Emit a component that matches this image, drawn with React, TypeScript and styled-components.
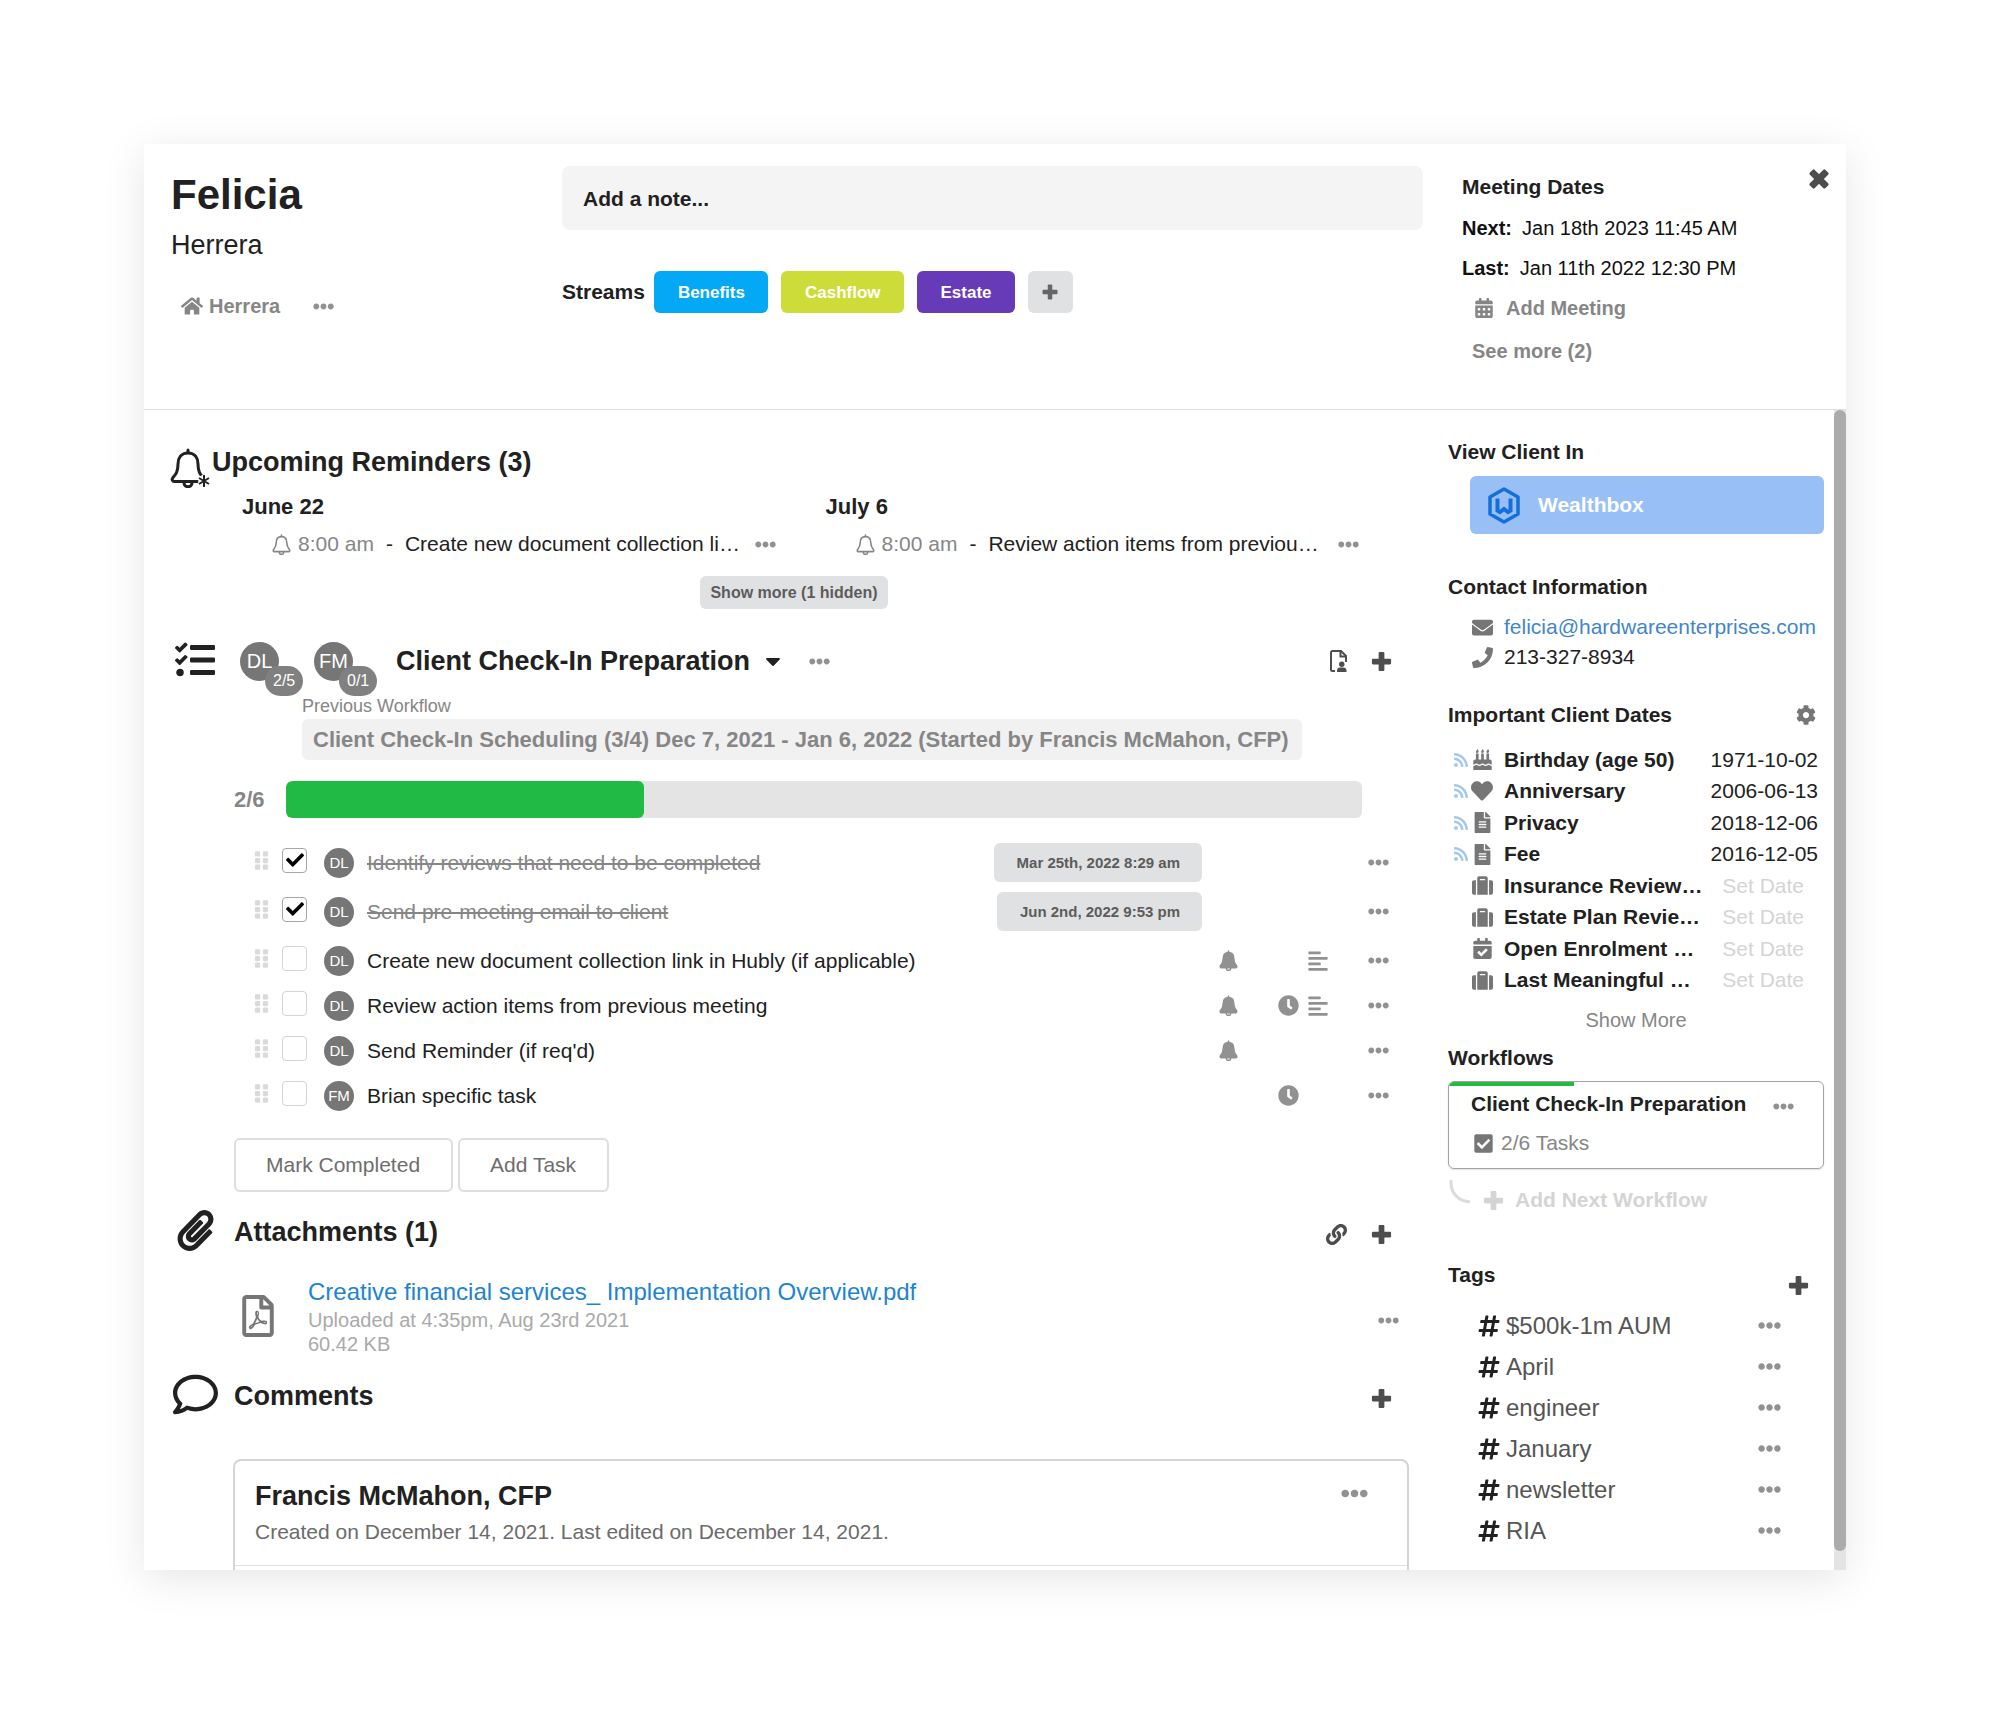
import React, { useState } from 'react';
import styled, { createGlobalStyle, css } from 'styled-components';
import {
  FaAlignLeft,
  FaBirthdayCake,
  FaCalendarAlt,
  FaCalendarCheck,
  FaCaretDown,
  FaCheck,
  FaCheckSquare,
  FaClock,
  FaCog,
  FaEllipsisH,
  FaEnvelope,
  FaFileAlt,
  FaGripVertical,
  FaHashtag,
  FaHeart,
  FaHome,
  FaLink,
  FaPaperclip,
  FaPhone,
  FaRegComment,
  FaRegFilePdf,
  FaRss,
  FaSuitcase,
  FaTasks,
} from 'react-icons/fa';

const color = {
  ink: '#212121',
  dark: '#4d4d4d',
  icon: '#767676',
  muted: '#868686',
  dots: '#919191',
  soft: '#aaaaaa',
  faint: '#d4d4d4',
  line: '#dddddd',
  chip: '#e0e1e2',
  chipText: '#5c5c5c',
  green: '#21ba45',
  link: '#1e84d0',
};

const GlobalStyle = createGlobalStyle`
  *, *::before, *::after { box-sizing: border-box; }
  body {
    margin: 0;
    background: #fff;
    color: ${color.ink};
    font-family: "Helvetica Neue", "Liberation Sans", Arial, sans-serif;
    font-size: 21px;
    line-height: 26px;
  }
  h1, h2, h3, h4, p, ul { margin: 0; padding: 0; }
  ul { list-style: none; }
  svg { display: block; flex: none; }
`;

const Page = styled.div`
  height: 100vh;
  padding: 144px;
`;

const Panel = styled.main`
  display: flex;
  flex-direction: column;
  height: 100%;
  background: #fff;
  box-shadow: 0 8px 40px rgba(0, 0, 0, 0.1);
`;

const PlainButton = styled.button`
  display: flex;
  align-items: center;
  margin: 0;
  padding: 0;
  border: 0;
  background: none;
  color: ${color.dark};
  font: inherit;
  cursor: pointer;
`;

const DotsButton = styled(PlainButton)<{ $size?: number }>`
  color: ${color.dots};
  font-size: ${(p) => p.$size ?? 21}px;
  line-height: 1;
`;

function Dots({ label, size }: { label: string; size?: number }) {
  return (
    <DotsButton type="button" aria-label={label} $size={size}>
      <FaEllipsisH />
    </DotsButton>
  );
}

/* ---------- header ---------- */

const Header = styled.header`
  display: grid;
  grid-template-columns: 391px minmax(0, 1fr) 423px;
  flex: none;
  padding: 22px 0 38px 27px;
  border-bottom: 1px solid ${color.line};
`;

const Identity = styled.div`
  padding-top: 5px;
`;

const FirstName = styled.h1`
  font-size: 42px;
  line-height: 48px;
`;

const LastName = styled.p`
  margin-top: 10px;
  font-size: 27px;
  line-height: 32px;
`;

const Household = styled.div`
  display: flex;
  align-items: center;
  gap: 33px;
  margin-top: 33px;
  padding-left: 10px;
`;

const HouseholdButton = styled(PlainButton)`
  gap: 6px;
  color: ${color.muted};
  font-size: 20px;
  font-weight: 700;
  line-height: 24px;
`;

const NoteInput = styled.input`
  display: block;
  width: 100%;
  height: 64px;
  padding: 2px 21px 0;
  border: 0;
  border-radius: 8px;
  background: #f4f4f4;
  color: ${color.ink};
  font: inherit;
  font-weight: 700;
  &::placeholder {
    color: ${color.ink};
    opacity: 1;
  }
`;

const Streams = styled.div`
  display: flex;
  align-items: center;
  gap: 13px;
  margin-top: 41px;
`;

const StreamsLabel = styled.span`
  margin-right: -4px;
  font-weight: 700;
`;

const StreamButton = styled.button<{ $bg: string }>`
  height: 42px;
  padding: 1px 23px 0 24px;
  border: 0;
  border-radius: 6px;
  background: ${(p) => p.$bg};
  color: #fff;
  font: inherit;
  font-size: 17px;
  font-weight: 700;
`;

const AddStreamButton = styled(PlainButton)`
  justify-content: center;
  width: 45px;
  height: 42px;
  border-radius: 6px;
  background: ${color.chip};
  color: #666;
`;

const Meetings = styled.section`
  display: flex;
  align-items: flex-start;
  justify-content: space-between;
  padding: 0 13px 0 39px;
`;

const MeetingList = styled.div`
  padding-top: 8px;
  font-size: 20px;
  line-height: 40px;
`;

const SideTitle = styled.h2`
  font-size: 21px;
  line-height: 26px;
`;

const MeetingRows = styled.div`
  margin-top: 8px;
`;

const MeetingRow = styled.p`
  display: flex;
  gap: 10px;
  color: #111;
`;

const MeetingAction = styled(PlainButton)`
  gap: 12px;
  padding-left: 12px;
  color: ${color.muted};
  font-weight: 700;
  & + & {
    margin-top: 3px;
    padding-left: 10px;
  }
`;

const CloseButton = styled(PlainButton)`
  height: 26px;
`;

/* ---------- body ---------- */

const Body = styled.div`
  display: flex;
  flex: 1;
  min-height: 0;
`;

const Scroller = styled.div`
  display: flex;
  flex: 1;
  min-width: 0;
  overflow-y: auto;
  scrollbar-width: none;
`;

const ScrollTrack = styled.div`
  flex: none;
  width: 12px;
  padding-bottom: 19px;
  background: #e4e4e4;
`;

const ScrollThumb = styled.div`
  height: 100%;
  border-radius: 6px;
  background: #ababab;
`;

const Content = styled.div`
  flex: 1;
  min-width: 0;
  padding: 36px 39px 0 27px;
`;

const SectionTitle = styled.h2`
  font-size: 27px;
  line-height: 32px;
  white-space: nowrap;
`;

const ReminderHead = styled.div`
  display: flex;
  align-items: flex-start;
  gap: 7px;
  height: 42px;
`;

const BellMark = styled.span`
  position: relative;
  display: flex;
  justify-content: center;
  width: 34px;
  padding-top: 2px;
`;

const BellStar = styled.svg`
  position: absolute;
  right: -6px;
  bottom: 0;
`;

const ReminderGrid = styled.div`
  display: grid;
  grid-template-columns: repeat(2, minmax(0, 1fr));
  margin: 6px 0 0 71px;
`;

const ReminderDay = styled.h3`
  font-size: 22px;
  line-height: 26px;
`;

const ReminderRow = styled.div`
  display: flex;
  align-items: center;
  gap: 12px;
  margin-top: 8px;
  padding: 0 50px 0 29px;
  line-height: 32px;
`;

const ReminderTime = styled.span`
  display: flex;
  align-items: center;
  gap: 6px;
  color: ${color.muted};
  white-space: nowrap;
`;

const ReminderText = styled.span`
  flex: 1;
  min-width: 0;
  white-space: nowrap;
`;

const ShowHiddenRow = styled.div`
  display: flex;
  justify-content: center;
  margin: 16px 0 0 8px;
`;

const ShowHiddenButton = styled.button`
  height: 33px;
  padding: 0 10px;
  border: 0;
  border-radius: 6px;
  background: ${color.chip};
  color: ${color.chipText};
  font: inherit;
  font-size: 16px;
  font-weight: 700;
`;

const SectionHead = styled.div<{ $top: number }>`
  display: flex;
  align-items: center;
  height: 42px;
  margin-top: ${(p) => p.$top}px;
  padding-right: 16px;
`;

const IconSlot = styled.span`
  display: flex;
  justify-content: center;
  width: 48px;
  margin-right: 15px;
  padding-bottom: 3px;
`;

const HeadActions = styled.div<{ $drop?: boolean }>`
  display: flex;
  align-items: center;
  gap: 23px;
  margin-left: auto;
  padding-top: ${(p) => (p.$drop ? 4 : 0)}px;
`;

const People = styled.div`
  display: flex;
  gap: 35px;
  margin: 0 43px 0 6px;
`;

const Avatar = styled.span<{ $large?: boolean }>`
  position: relative;
  display: flex;
  flex: none;
  align-items: center;
  justify-content: center;
  width: ${(p) => (p.$large ? 39 : 30)}px;
  height: ${(p) => (p.$large ? 39 : 30)}px;
  border-radius: 50%;
  background: ${color.icon};
  color: #fff;
  font-size: ${(p) => (p.$large ? 20 : 15)}px;
`;

const AvatarCount = styled.span`
  position: absolute;
  top: 24px;
  left: 25px;
  height: 30px;
  padding: 0 8px;
  border-radius: 15px;
  background: #808080;
  font-size: 16px;
  line-height: 30px;
`;

const WorkflowPicker = styled(PlainButton)`
  gap: 11px;
  margin-right: 24px;
  color: ${color.ink};
  white-space: nowrap;
`;

const Previous = styled.div`
  margin: 13px 0 0 131px;
`;

const PreviousLabel = styled.p`
  color: ${color.muted};
  font-size: 18px;
  line-height: 22px;
`;

const PreviousButton = styled.button`
  height: 41px;
  margin-top: 2px;
  padding: 0 13px 0 11px;
  border: 0;
  border-radius: 6px;
  background: #f1f1f1;
  color: ${color.muted};
  font: inherit;
  font-size: 22px;
  font-weight: 700;
  white-space: nowrap;
`;

const ProgressRow = styled.div`
  display: flex;
  align-items: center;
  gap: 21px;
  margin-top: 21px;
  padding: 0 47px 0 63px;
`;

const ProgressLabel = styled.span`
  color: ${color.muted};
  font-size: 22px;
  font-weight: 700;
`;

const ProgressTrack = styled.div`
  flex: 1;
  height: 37px;
  overflow: hidden;
  border-radius: 6px;
  background: #e4e4e4;
`;

const ProgressFill = styled.div`
  height: 100%;
  border-radius: 6px;
  background: ${color.green};
`;

const TaskList = styled.ul`
  display: flex;
  flex-direction: column;
  margin-top: 20px;
`;

const TaskRow = styled.li<{ $done: boolean }>`
  display: flex;
  align-items: center;
  height: ${(p) => (p.$done ? 49 : 45)}px;
  padding: 0 16px 0 80px;
`;

const TaskGap = styled.li`
  height: 2px;
`;

const TaskControls = styled.span`
  display: flex;
  align-items: center;
  gap: 10px;
  margin-right: 17px;
  padding-bottom: 5px;
  color: #dadada;
`;

const CheckWrap = styled.span`
  position: relative;
  display: flex;
  align-items: center;
  justify-content: center;
  width: 25px;
  height: 25px;
`;

const CheckInput = styled.input`
  position: absolute;
  inset: 0;
  width: 100%;
  height: 100%;
  margin: 0;
  border: 1px solid #d4d4d5;
  border-radius: 4px;
  appearance: none;
  background: #fff;
  &:checked { border-color: #a6a6a6; }
`;

const CheckGlyph = styled(FaCheck)`
  position: relative;
  color: #000;
  font-size: 18px;
  pointer-events: none;
`;

const TaskLabel = styled.label<{ $done: boolean }>`
  flex: 1;
  margin-left: 13px;
  ${(p) =>
    p.$done &&
    css`
      color: ${color.muted};
    `}
`;

const Struck = styled.s`
  text-decoration-thickness: 2px;
`;

const DatePill = styled.button`
  height: 39px;
  margin-right: 11px;
  padding: 0 22px 0 23px;
  border: 0;
  border-radius: 6px;
  background: ${color.chip};
  color: ${color.chipText};
  font: inherit;
  font-size: 15px;
  font-weight: 700;
`;

const TaskIcons = styled.span`
  display: grid;
  grid-template-columns: repeat(6, 30px);
  align-items: center;
  justify-items: center;
  color: ${color.dots};
`;

const TaskButtons = styled.div`
  display: flex;
  gap: 5px;
  margin: 20px 0 0 63px;
`;

const OutlineButton = styled.button`
  height: 54px;
  padding: 0 31px 0 30px;
  border: 2px solid #dededf;
  border-radius: 6px;
  background: #fff;
  color: #6e6e6e;
  font: inherit;
`;

const FileRow = styled.div`
  display: flex;
  align-items: center;
  gap: 29px;
  margin-top: 23px;
  padding: 0 10px 0 66px;
  color: ${color.icon};
`;

const FileInfo = styled.div`
  flex: 1;
  color: ${color.soft};
  font-size: 20px;
  line-height: 24px;
`;

const FileLink = styled.a`
  display: block;
  color: ${color.link};
  font-size: 24px;
  line-height: 32px;
  text-decoration: none;
`;

const FileActions = styled.div`
  padding-top: 8px;
`;

const CommentCard = styled.article`
  margin: 42px 0 24px 62px;
  border: 2px solid #d4d4d5;
  border-radius: 8px;
`;

const CommentHead = styled.header`
  display: flex;
  align-items: flex-start;
  justify-content: space-between;
  padding: 19px 39px 20px 20px;
  border-bottom: 1px solid #e2e2e2;
`;

const CommentMeta = styled.p`
  margin-top: 7px;
  color: #6b6b6b;
`;

const CommentBody = styled.div`
  min-height: 60px;
`;

/* ---------- sidebar ---------- */

const Sidebar = styled.aside`
  flex: none;
  width: 386px;
  padding: 29px 10px 0 0;
`;

const CrmButton = styled.button`
  display: flex;
  align-items: center;
  gap: 18px;
  width: 354px;
  height: 58px;
  margin: 11px 0 0 22px;
  padding: 0 18px;
  border: 0;
  border-radius: 6px;
  background: #99bff7;
  color: #fff;
  font: inherit;
  font-weight: 700;
`;

const SideHead = styled.div<{ $top: number }>`
  display: flex;
  align-items: center;
  justify-content: space-between;
  height: 26px;
  margin-top: ${(p) => p.$top}px;
  padding-right: 8px;
`;

const ContactList = styled.ul`
  margin-top: 12px;
  padding-left: 22px;
`;

const ContactItem = styled.li`
  display: flex;
  align-items: center;
  gap: 10px;
  height: 30px;
  white-space: nowrap;
`;

const ContactIcon = styled.span`
  display: flex;
  justify-content: center;
  width: 24px;
  color: ${color.icon};
`;

const EmailLink = styled.a`
  color: #4285cc;
  text-decoration: none;
`;

const DatesTable = styled.table`
  width: 100%;
  height: 252px;
  margin-top: 16px;
  border-collapse: collapse;
  white-space: nowrap;
  td, th { padding: 0; }
`;

const FeedCell = styled.td`
  width: 22px;
  color: #a5c7f2;
  svg { margin-left: 5px; }
`;

const KindCell = styled.td`
  width: 24px;
  color: ${color.icon};
  svg { margin: 0 auto; }
`;

const NameCell = styled.th`
  && { padding-left: 10px; }
  text-align: left;
`;

const DateCell = styled.td`
  && { padding-right: 6px; }
  text-align: right;
`;

const SetDateButton = styled.button`
  margin-right: 14px;
  padding: 0;
  border: 0;
  background: none;
  color: ${color.faint};
  font: inherit;
`;

const ShowMoreButton = styled(PlainButton)`
  margin: 11px auto 0;
  color: ${color.muted};
  font-size: 20px;
`;

const WorkflowCard = styled.article`
  margin-top: 10px;
  overflow: hidden;
  border: 1px solid #a3a3a3;
  border-radius: 6px;
  box-shadow: 0 1px 2px rgba(0, 0, 0, 0.12);
`;

const WorkflowBar = styled.div`
  height: 4px;
  background: ${color.green};
`;

const WorkflowTop = styled.div`
  display: flex;
  align-items: flex-end;
  justify-content: space-between;
  padding: 5px 29px 0 22px;
`;

const WorkflowName = styled.h3`
  font-size: 21px;
  line-height: 26px;
`;

const WorkflowTasks = styled.p`
  display: flex;
  align-items: center;
  gap: 7px;
  padding: 13px 24px 12px;
  color: ${color.muted};
  svg { color: ${color.icon}; }
`;

const NextWorkflow = styled.div`
  display: flex;
  align-items: flex-start;
  height: 42px;
  margin-top: 10px;
`;

const NextButton = styled(PlainButton)`
  gap: 10px;
  height: 42px;
  margin-left: 11px;
  color: ${color.faint};
  font-weight: 700;
`;

const TagsHead = styled.div`
  display: flex;
  justify-content: space-between;
  height: 35px;
  margin-top: 41px;
  padding-right: 14px;
`;

const AddTagButton = styled(PlainButton)`
  align-self: flex-end;
`;

const TagList = styled.ul`
  margin-top: 8px;
  padding: 0 43px 0 29px;
`;

const TagItem = styled.li`
  display: flex;
  align-items: center;
  gap: 5px;
  height: 41px;
  font-size: 24px;
`;

const TagName = styled.span`
  flex: 1;
  color: #555;
`;

/* ---------- drawings ---------- */

function PlusIcon({ size = 23 }: { size?: number }) {
  return (
    <svg width={size} height={size} viewBox="-2 -2 24 24" fill="currentColor">
      <rect x="7" y="0" width="6" height="20" rx="1.200" />
      <rect x="0" y="7" width="20" height="6" rx="1.200" />
    </svg>
  );
}

function CrossIcon() {
  return (
    <svg width="28" height="28" viewBox="0 0 28 28" fill="currentColor">
      <rect x="3" y="10.500" width="22" height="7" rx="1.600" transform="rotate(45 14 14)" />
      <rect x="3" y="10.500" width="22" height="7" rx="1.600" transform="rotate(-45 14 14)" />
    </svg>
  );
}

function BellIcon({ size, solid }: { size: number; solid?: boolean }) {
  return (
    <svg
      width={size}
      height={size}
      viewBox="-2 0 40 40"
      fill="none"
      stroke="currentColor"
      strokeWidth="3"
      strokeLinejoin="round"
      strokeLinecap="round"
    >
      <path
        d="M18 5C11 5 8 10 8 16C8 24 5.500 26.500 3 29.500C1.500 31.500 2.200 33.500 4.500 33.500H31.500C33.800 33.500 34.500 31.500 33 29.500C30.500 26.500 28 24 28 16C28 10 25 5 18 5Z"
        fill={solid ? 'currentColor' : 'none'}
      />
      <path d="M18 2V4.500" />
      <path d="M14 35C14 40 22 40 22 35" />
    </svg>
  );
}

function FileUserIcon() {
  return (
    <svg width="17" height="22" viewBox="0 0 34 44" fill="none" stroke="currentColor" strokeWidth="4">
      <path d="M10 42H5a3 3 0 0 1-3-3V5a3 3 0 0 1 3-3h17l10 10v12" />
      <path d="M21 3v10h11" />
      <circle cx="23.500" cy="28.500" r="5.500" fill="currentColor" stroke="none" />
      <path d="M14 44v-3c0-4 3-6 6-6h7c3 0 6 2 6 6v3z" fill="currentColor" stroke="none" />
    </svg>
  );
}

function WealthboxLogo() {
  return (
    <svg width="32" height="37" viewBox="0 0 32 37" fill="none" stroke="#136fdc">
      <path d="M16 2L30 10V27L16 35L2 27V10Z" strokeWidth="3.500" strokeLinejoin="round" />
      <path d="M9.500 11.500V23.500L12 25L16 22L20 25L22.500 23.500V11.500" strokeWidth="4" />
    </svg>
  );
}

function StarMark() {
  const arms = 'M7 1V13M2 4L12 10M12 4L2 10';
  return (
    <BellStar width="14" height="14" viewBox="0 0 14 14" fill="none">
      <path d={arms} stroke="#fff" strokeWidth="5" />
      <path d={arms} stroke={color.ink} strokeWidth="2" />
    </BellStar>
  );
}

/* ---------- data ---------- */

const streams = [
  { name: 'Benefits', bg: '#03a9f4' },
  { name: 'Cashflow', bg: '#cddc39' },
  { name: 'Estate', bg: '#673ab7' },
];

const reminders = [
  { day: 'June 22', time: '8:00 am', text: 'Create new document collection li…' },
  { day: 'July 6', time: '8:00 am', text: 'Review action items from previou…' },
];

const people = [
  { initials: 'DL', count: '2/5' },
  { initials: 'FM', count: '0/1' },
];

type Task = {
  who: string;
  text: string;
  completed?: string;
  bell?: boolean;
  clock?: boolean;
  notes?: boolean;
};

const doneTasks: Task[] = [
  { who: 'DL', text: 'Identify reviews that need to be completed', completed: 'Mar 25th, 2022 8:29 am' },
  { who: 'DL', text: 'Send pre-meeting email to client', completed: 'Jun 2nd, 2022 9:53 pm' },
];

const openTasks: Task[] = [
  { who: 'DL', text: 'Create new document collection link in Hubly (if applicable)', bell: true, notes: true },
  { who: 'DL', text: 'Review action items from previous meeting', bell: true, clock: true, notes: true },
  { who: 'DL', text: "Send Reminder (if req'd)", bell: true },
  { who: 'FM', text: 'Brian specific task', clock: true },
];

const dates = [
  { icon: <FaBirthdayCake size={21} />, name: 'Birthday (age 50)', date: '1971-10-02' },
  { icon: <FaHeart size={22} />, name: 'Anniversary', date: '2006-06-13' },
  { icon: <FaFileAlt size={21} />, name: 'Privacy', date: '2018-12-06' },
  { icon: <FaFileAlt size={21} />, name: 'Fee', date: '2016-12-05' },
  { icon: <FaSuitcase size={21} />, name: 'Insurance Review…' },
  { icon: <FaSuitcase size={21} />, name: 'Estate Plan Revie…' },
  { icon: <FaCalendarCheck size={21} />, name: 'Open Enrolment …' },
  { icon: <FaSuitcase size={21} />, name: 'Last Meaningful …' },
];

const tags = ['$500k-1m AUM', 'April', 'engineer', 'January', 'newsletter', 'RIA'];

function TaskItem({ task, id }: { task: Task; id: string }) {
  const [checked, setChecked] = useState(Boolean(task.completed));
  const done = Boolean(task.completed);
  return (
    <TaskRow $done={done}>
      <TaskControls>
        <FaGripVertical size={21} />
        <CheckWrap>
          <CheckInput id={id} type="checkbox" checked={checked} onChange={(e) => setChecked(e.target.checked)} />
          {checked && <CheckGlyph />}
        </CheckWrap>
      </TaskControls>
      <Avatar>{task.who}</Avatar>
      <TaskLabel htmlFor={id} $done={done}>
        {done ? <Struck>{task.text}</Struck> : task.text}
      </TaskLabel>
      {task.completed && <DatePill type="button">{task.completed}</DatePill>}
      <TaskIcons>
        <span>{task.bell && <BellIcon size={21} solid />}</span>
        <span />
        <span>{task.clock && <FaClock size={21} />}</span>
        <span>{task.notes && <FaAlignLeft size={22} />}</span>
        <span />
        <Dots label="Task options" />
      </TaskIcons>
    </TaskRow>
  );
}

export default function App() {
  return (
    <Page>
      <GlobalStyle />
      <Panel>
        <Header>
          <Identity>
            <FirstName>Felicia</FirstName>
            <LastName>Herrera</LastName>
            <Household>
              <HouseholdButton type="button">
                <FaHome size={22} />
                Herrera
              </HouseholdButton>
              <Dots label="Household options" />
            </Household>
          </Identity>

          <div>
            <NoteInput type="text" aria-label="Add a note" placeholder="Add a note..." />
            <Streams>
              <StreamsLabel>Streams</StreamsLabel>
              {streams.map((s) => (
                <StreamButton key={s.name} type="button" $bg={s.bg}>
                  {s.name}
                </StreamButton>
              ))}
              <AddStreamButton type="button" aria-label="Add stream">
                <PlusIcon size={18} />
              </AddStreamButton>
            </Streams>
          </div>

          <Meetings>
            <MeetingList>
              <SideTitle>Meeting Dates</SideTitle>
              <MeetingRows>
                <MeetingRow>
                  <strong>Next:</strong>
                  <span>Jan 18th 2023 11:45 AM</span>
                </MeetingRow>
                <MeetingRow>
                  <strong>Last:</strong>
                  <span>Jan 11th 2022 12:30 PM</span>
                </MeetingRow>
                <MeetingAction type="button">
                  <FaCalendarAlt size={20} />
                  Add Meeting
                </MeetingAction>
                <MeetingAction type="button">See more (2)</MeetingAction>
              </MeetingRows>
            </MeetingList>
            <CloseButton type="button" aria-label="Close">
              <CrossIcon />
            </CloseButton>
          </Meetings>
        </Header>

        <Body>
          <Scroller>
            <Content>
              <section>
                <ReminderHead>
                  <BellMark>
                    <BellIcon size={40} />
                    <StarMark />
                  </BellMark>
                  <SectionTitle>Upcoming Reminders (3)</SectionTitle>
                </ReminderHead>
                <ReminderGrid>
                  {reminders.map((r) => (
                    <div key={r.day}>
                      <ReminderDay>{r.day}</ReminderDay>
                      <ReminderRow>
                        <ReminderTime>
                          <BellIcon size={21} />
                          {r.time}
                        </ReminderTime>
                        <span>-</span>
                        <ReminderText>{r.text}</ReminderText>
                        <Dots label="Reminder options" />
                      </ReminderRow>
                    </div>
                  ))}
                </ReminderGrid>
                <ShowHiddenRow>
                  <ShowHiddenButton type="button">Show more (1 hidden)</ShowHiddenButton>
                </ShowHiddenRow>
              </section>

              <section>
                <SectionHead $top={31}>
                  <IconSlot>
                    <FaTasks size={40} />
                  </IconSlot>
                  <People>
                    {people.map((p) => (
                      <Avatar key={p.initials} $large>
                        {p.initials}
                        <AvatarCount>{p.count}</AvatarCount>
                      </Avatar>
                    ))}
                  </People>
                  <WorkflowPicker type="button">
                    <SectionTitle as="strong">Client Check-In Preparation</SectionTitle>
                    <FaCaretDown size={24} />
                  </WorkflowPicker>
                  <Dots label="Workflow options" />
                  <HeadActions>
                    <PlainButton type="button" aria-label="Assign template">
                      <FileUserIcon />
                    </PlainButton>
                    <PlainButton type="button" aria-label="Add workflow">
                      <PlusIcon />
                    </PlainButton>
                  </HeadActions>
                </SectionHead>

                <Previous>
                  <PreviousLabel>Previous Workflow</PreviousLabel>
                  <PreviousButton type="button">
                    Client Check-In Scheduling (3/4) Dec 7, 2021 - Jan 6, 2022 (Started by Francis McMahon, CFP)
                  </PreviousButton>
                </Previous>

                <ProgressRow>
                  <ProgressLabel>2/6</ProgressLabel>
                  <ProgressTrack>
                    <ProgressFill style={{ width: `${(2 / 6) * 100}%` }} />
                  </ProgressTrack>
                </ProgressRow>

                <TaskList>
                  {doneTasks.map((t, i) => (
                    <TaskItem key={t.text} task={t} id={`done-${i}`} />
                  ))}
                  <TaskGap aria-hidden="true" />
                  {openTasks.map((t, i) => (
                    <TaskItem key={t.text} task={t} id={`open-${i}`} />
                  ))}
                </TaskList>

                <TaskButtons>
                  <OutlineButton type="button">Mark Completed</OutlineButton>
                  <OutlineButton type="button">Add Task</OutlineButton>
                </TaskButtons>
              </section>

              <section>
                <SectionHead $top={19}>
                  <IconSlot>
                    <FaPaperclip size={41} />
                  </IconSlot>
                  <SectionTitle>Attachments (1)</SectionTitle>
                  <HeadActions $drop>
                    <PlainButton type="button" aria-label="Add link">
                      <FaLink size={21} />
                    </PlainButton>
                    <PlainButton type="button" aria-label="Add attachment">
                      <PlusIcon />
                    </PlainButton>
                  </HeadActions>
                </SectionHead>
                <FileRow>
                  <FaRegFilePdf size={42} />
                  <FileInfo>
                    <FileLink href="#attachment">Creative financial services_ Implementation Overview.pdf</FileLink>
                    <p>Uploaded at 4:35pm, Aug 23rd 2021</p>
                    <p>60.42 KB</p>
                  </FileInfo>
                  <FileActions>
                    <Dots label="Attachment options" />
                  </FileActions>
                </FileRow>
              </section>

              <section>
                <SectionHead $top={19}>
                  <IconSlot>
                    <FaRegComment size={45} />
                  </IconSlot>
                  <SectionTitle>Comments</SectionTitle>
                  <HeadActions $drop>
                    <PlainButton type="button" aria-label="Add comment">
                      <PlusIcon />
                    </PlainButton>
                  </HeadActions>
                </SectionHead>
                <CommentCard>
                  <CommentHead>
                    <div>
                      <SectionTitle as="h3">Francis McMahon, CFP</SectionTitle>
                      <CommentMeta>Created on December 14, 2021. Last edited on December 14, 2021.</CommentMeta>
                    </div>
                    <Dots label="Comment options" size={27} />
                  </CommentHead>
                  <CommentBody />
                </CommentCard>
              </section>
            </Content>

            <Sidebar>
              <SideTitle>View Client In</SideTitle>
              <CrmButton type="button">
                <WealthboxLogo />
                Wealthbox
              </CrmButton>

              <SideHead $top={40}>
                <SideTitle>Contact Information</SideTitle>
              </SideHead>
              <ContactList>
                <ContactItem>
                  <ContactIcon>
                    <FaEnvelope size={21} />
                  </ContactIcon>
                  <EmailLink href="mailto:felicia@hardwareenterprises.com">felicia@hardwareenterprises.com</EmailLink>
                </ContactItem>
                <ContactItem>
                  <ContactIcon>
                    <FaPhone size={21} />
                  </ContactIcon>
                  213-327-8934
                </ContactItem>
              </ContactList>

              <SideHead $top={30}>
                <SideTitle>Important Client Dates</SideTitle>
                <PlainButton type="button" aria-label="Date settings">
                  <FaCog size={20} color={color.icon} />
                </PlainButton>
              </SideHead>
              <DatesTable>
                <tbody>
                  {dates.map((d) => (
                    <tr key={d.name}>
                      <FeedCell>{d.date && <FaRss size={16} />}</FeedCell>
                      <KindCell>{d.icon}</KindCell>
                      <NameCell scope="row">{d.name}</NameCell>
                      <DateCell>{d.date ?? <SetDateButton type="button">Set Date</SetDateButton>}</DateCell>
                    </tr>
                  ))}
                </tbody>
              </DatesTable>
              <ShowMoreButton type="button">Show More</ShowMoreButton>

              <SideHead $top={12}>
                <SideTitle>Workflows</SideTitle>
              </SideHead>
              <WorkflowCard>
                <WorkflowBar style={{ width: `${(2 / 6) * 100}%` }} />
                <WorkflowTop>
                  <WorkflowName>Client Check-In Preparation</WorkflowName>
                  <Dots label="Workflow options" />
                </WorkflowTop>
                <WorkflowTasks>
                  <FaCheckSquare size={21} />
                  2/6 Tasks
                </WorkflowTasks>
              </WorkflowCard>
              <NextWorkflow>
                <svg width="23" height="26" viewBox="0 0 23 26" fill="none" stroke="#dcdcdc" strokeWidth="3">
                  <path d="M3 1V4C3 14 10 22 22 23" />
                </svg>
                <NextButton type="button">
                  <PlusIcon />
                  Add Next Workflow
                </NextButton>
              </NextWorkflow>

              <TagsHead>
                <SideTitle>Tags</SideTitle>
                <AddTagButton type="button" aria-label="Add tag">
                  <PlusIcon />
                </AddTagButton>
              </TagsHead>
              <TagList>
                {tags.map((t) => (
                  <TagItem key={t}>
                    <FaHashtag size={24} />
                    <TagName>{t}</TagName>
                    <Dots label={`Options for ${t}`} size={23} />
                  </TagItem>
                ))}
              </TagList>
            </Sidebar>
          </Scroller>
          <ScrollTrack>
            <ScrollThumb />
          </ScrollTrack>
        </Body>
      </Panel>
    </Page>
  );
}
